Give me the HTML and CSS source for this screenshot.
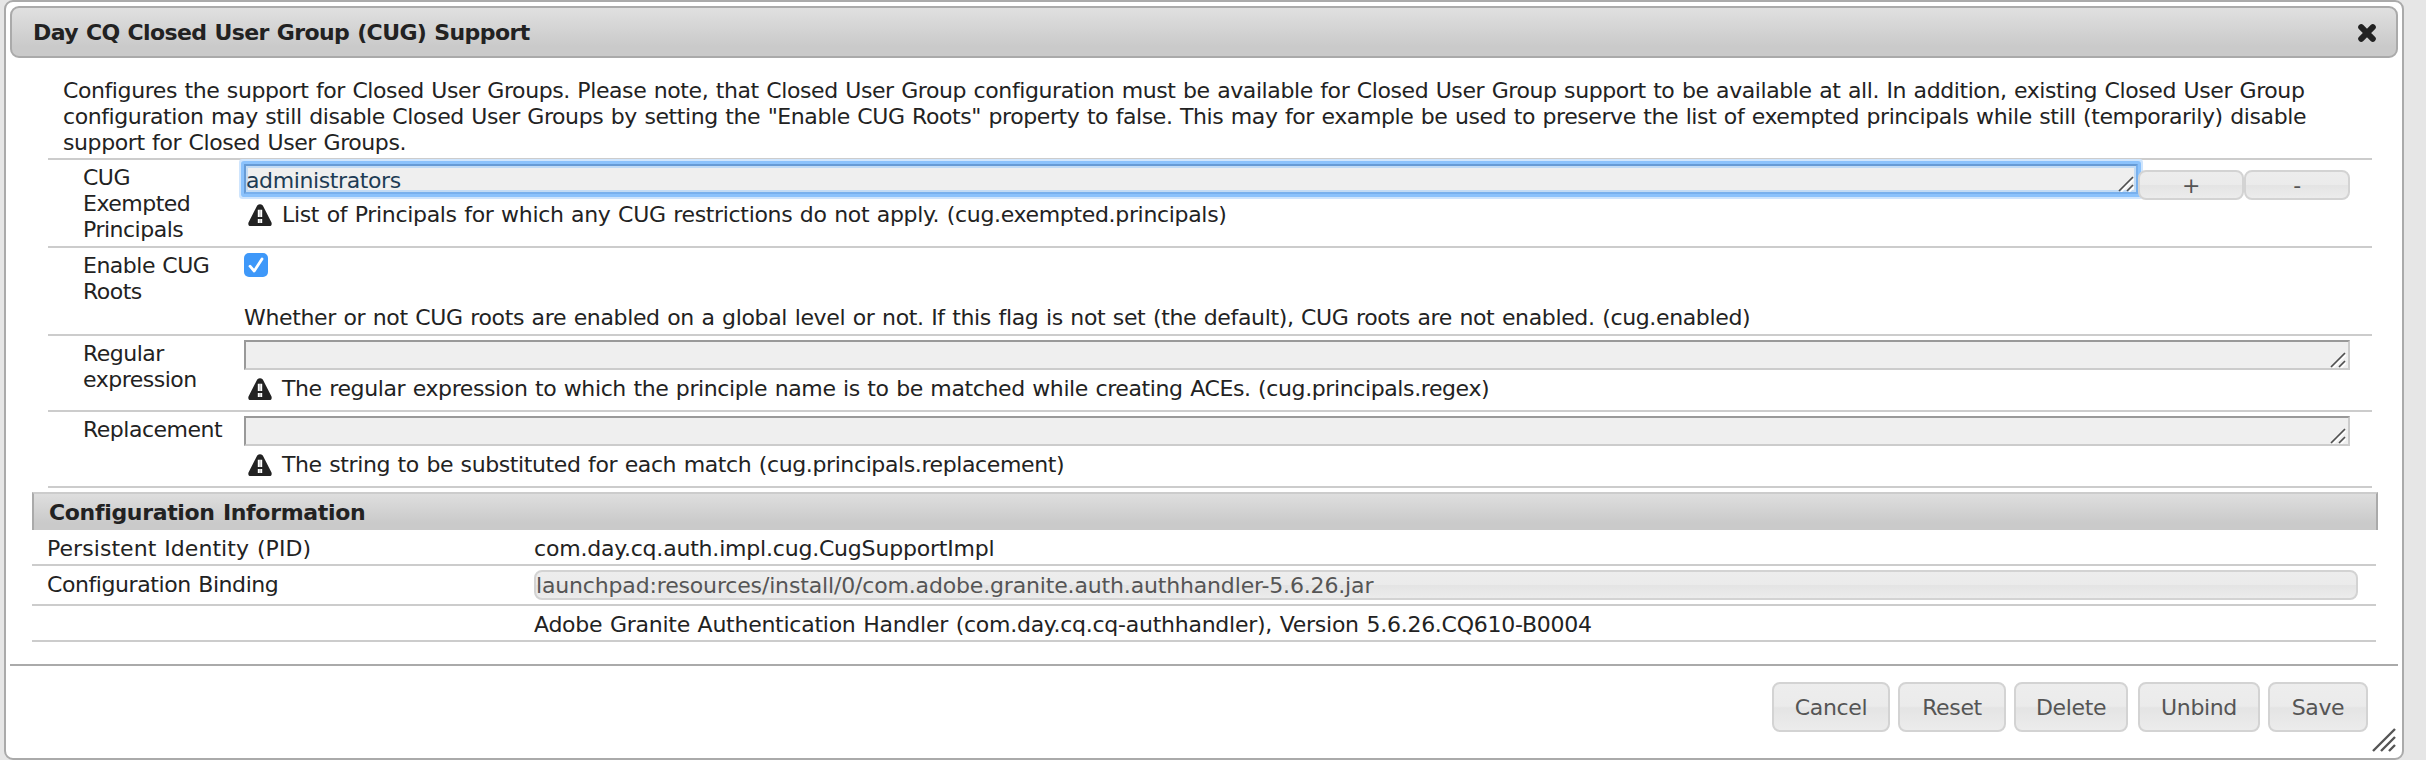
FILE: index.html
```html
<!DOCTYPE html>
<html lang="en">
<head>
<meta charset="utf-8">
<title>Day CQ Closed User Group (CUG) Support</title>
<link rel="stylesheet" href="styles.css">
</head>
<body>
<svg class="defs" width="0" height="0" aria-hidden="true">
  <symbol id="warning" viewBox="0 0 24 22">
    <path fill="#222" fill-rule="evenodd" d="M9.200 1.500Q12 -1.200 14.800 1.500L23.500 18.500Q24.200 21.700 22.500 22H1.500Q-.2 21.700 .5 18.500ZM9.800 5.800V13H14.200V5.800ZM9.800 15V19H14.200V15Z"/>
    <path d="M12 6V13M12 15V19" stroke="#222" stroke-width="1" opacity=".35"/>
  </symbol>
  <symbol id="grip" viewBox="0 0 16 16">
    <path stroke="#fff" stroke-width="1.500" d="M3 16L16 3M11 16L16 11"/>
    <path stroke="#505050" stroke-width="1.700" d="M1 15L15 1M9 15L15 9"/>
  </symbol>
</svg>
<div class="dialog">
  <header class="titlebar">
    <h1 class="title">Day CQ Closed User Group (CUG) Support</h1>
    <svg class="close" viewBox="0 0 20 20"><path d="M4.200 4.200L15.800 15.800M15.800 4.200L4.200 15.800" stroke="#222" stroke-width="6" stroke-linecap="round"/></svg>
  </header>
  <main class="content">
    <p class="intro">Configures the support for Closed User Groups. Please note, that Closed User Group configuration must be available for Closed User Group support to be available at all. In addition, existing Closed User Group<br>configuration may still disable Closed User Groups by setting the "Enable CUG Roots" property to false. This may for example be used to preserve the list of exempted principals while still (temporarily) disable<br>support for Closed User Groups.</p>
    <section class="form">
      <div class="row row-tall">
        <div class="label">CUG<br>Exempted<br>Principals</div>
        <div class="field">
          <div class="multi">
            <div class="input input-focus"><span>administrators</span><svg class="grip"><use href="#grip"/></svg></div>
            <button class="btn btn-small">+</button><button class="btn btn-small">-</button>
          </div>
          <div class="hint hint-first"><svg class="warning"><use href="#warning"/></svg><span>List of Principals for which any CUG restrictions do not apply. (cug.exempted.principals)</span></div>
        </div>
      </div>
      <div class="row row-tall">
        <div class="label">Enable CUG<br>Roots</div>
        <div class="field">
          <svg class="check" viewBox="0 0 24 24"><rect width="24" height="24" rx="5" fill="#3e98f9"/><path d="M6 13.200L10.200 18L18 6" fill="none" stroke="#fff" stroke-width="2.800" stroke-linecap="round" stroke-linejoin="round"/></svg>
          <div class="note">Whether or not CUG roots are enabled on a global level or not. If this flag is not set (the default), CUG roots are not enabled. (cug.enabled)</div>
        </div>
      </div>
      <div class="row">
        <div class="label">Regular<br>expression</div>
        <div class="field">
          <div class="input"><svg class="grip"><use href="#grip"/></svg></div>
          <div class="hint"><svg class="warning"><use href="#warning"/></svg><span>The regular expression to which the principle name is to be matched while creating ACEs. (cug.principals.regex)</span></div>
        </div>
      </div>
      <div class="row">
        <div class="label">Replacement</div>
        <div class="field">
          <div class="input"><svg class="grip"><use href="#grip"/></svg></div>
          <div class="hint"><svg class="warning"><use href="#warning"/></svg><span>The string to be substituted for each match (cug.principals.replacement)</span></div>
        </div>
      </div>
    </section>
    <section class="info">
      <h2 class="info-head">Configuration Information</h2>
      <div class="info-row info-pid"><span>Persistent Identity (PID)</span><span class="value">com.day.cq.auth.impl.cug.CugSupportImpl</span></div>
      <div class="info-row info-bind"><span>Configuration Binding</span><span class="btn binding">launchpad:resources/install/0/com.adobe.granite.auth.authhandler-5.6.26.jar</span></div>
      <div class="info-row"><span></span><span class="bundle">Adobe Granite Authentication Handler (com.day.cq.cq-authhandler), Version 5.6.26.CQ610-B0004</span></div>
    </section>
  </main>
  <footer class="footer">
    <button class="btn cancel">Cancel</button>
    <button class="btn reset">Reset</button>
    <button class="btn delete">Delete</button>
    <button class="btn unbind">Unbind</button>
    <button class="btn save">Save</button>
  </footer>
  <svg class="resize" viewBox="0 0 24 24"><path d="M1 23L23 1M9 23L23 9M17 23L23 17" stroke="#555" stroke-width="2.400"/></svg>
</div>
</body>
</html>
```
FILE: styles.css
```css
* { box-sizing: border-box; }
body {
  margin: 0;
  height: 760px;
  overflow: hidden;
  background: #e6e6e6;
  color: #222;
  font: 22px/26px Verdana, "DejaVu Sans", sans-serif;
  letter-spacing: -0.2px;
  word-spacing: 0.9px;
}
.defs { display: block; }
h1, h2, p { margin: 0; font-size: 22px; line-height: 26px; }
button { font: inherit; letter-spacing: inherit; margin: 0; padding: 0; }
.dialog {
  position: relative;
  width: 2400px;
  height: 760px;
  margin-left: 4px;
  padding: 4px;
  background: #fff;
  border: 2px solid #aaa;
  border-radius: 9px;
}
.titlebar {
  display: flex;
  align-items: center;
  justify-content: space-between;
  height: 52px;
  padding: 1px 19px 0 21px;
  border: 2px solid #aaa;
  border-radius: 9px;
  background: linear-gradient(#e0e0e0, #cacaca 80%);
}
.title { letter-spacing: -0.6px; }
.close { width: 20px; height: 20px; }
.content { padding: 20px 20px 0 22px; height: 606px; }
.intro { padding-left: 31px; white-space: nowrap; letter-spacing: -0.41px; }
.form { margin: 2px 6px 0 16px; border-top: 2px solid #ccc; }
.row {
  display: grid;
  grid-template-columns: 160px 1fr;
  height: 76px;
  padding: 4px 22px 0 36px;
  border-bottom: 2px solid #ccc;
}
.row-tall { height: 88px; }
.label { margin-left: -1px; padding-top: 1px; letter-spacing: -0.5px; }
.field { min-width: 0; white-space: nowrap; letter-spacing: -0.39px; }
.input {
  position: relative;
  height: 30px;
  border: 2px solid;
  border-color: #999 #ccc #ccc #999;
  background: #efefef;
}
.grip { position: absolute; right: 2px; bottom: 0; width: 16px; height: 16px; }
.multi { display: flex; align-items: flex-start; }
.input-focus {
  flex: 1;
  padding-top: 2px;
  line-height: 26px;
  color: #1d3c55;
  border-color: #669bd6 #78b0ed #78b0ed #669bd6;
  box-shadow: 0 0 0 3px #8bc2fc, 0 0 0 5px #cfe5fd, inset 0 0 0 2px #c2dbf5;
  border-radius: 1px;
}
.btn {
  border: 2px solid #d3d3d3;
  border-radius: 8px;
  color: #555;
  background: linear-gradient(#ededed 0%, #ebebeb 48%, #e4e4e4 52%, #ececec 100%);
}
.btn-small { position: relative; width: 106px; height: 30px; margin-top: 6px; padding-top: 1px; line-height: 25px; }
.hint { display: flex; margin-top: 6px; padding-left: 4px; gap: 10px; }
.hint-first { margin-top: 2px; letter-spacing: -0.33px; }
.warning { width: 24px; height: 22px; margin-top: 2px; }
.check { display: block; width: 24px; height: 24px; margin-top: 1px; }
.note { margin-top: 28px; letter-spacing: -0.355px; }
.info { margin-top: 4px; }
.info-head {
  height: 38px;
  padding: 6px 15px 0;
  border: 2px solid #aaa;
  border-top-color: #ccc;
  border-bottom: 0;
  letter-spacing: -0.33px;
  background: linear-gradient(#dedede, #cacaca 80%);
}
.info-row {
  display: grid;
  grid-template-columns: 486px 1fr;
  height: 36px;
  margin-right: 2px;
  padding: 6px 18px 0 15px;
  border-bottom: 2px solid #ccc;
}
.info-row > :last-child { margin-left: 1px; }
.info-pid { letter-spacing: 0.05px; }
.value { letter-spacing: -0.2px; }
.info-bind { height: 40px; letter-spacing: -0.42px; }
.binding { height: 30px; margin-top: -2px; padding-top: 1px; line-height: 26px; letter-spacing: -0.16px; }
.bundle { letter-spacing: -0.255px; }
.footer {
  display: flex;
  justify-content: flex-end;
  gap: 8px;
  height: 88px;
  padding: 16px 30px 0;
  border-top: 2px solid #aaa;
}
.footer .btn { height: 50px; padding-top: 2px; letter-spacing: -0.35px; }
.cancel { width: 118px; }
.reset { width: 108px; }
.delete { width: 114px; }
.unbind { width: 122px; margin-left: 2px; }
.save { width: 100px; }
.resize { position: absolute; right: 6px; bottom: 6px; width: 24px; height: 24px; }
```
